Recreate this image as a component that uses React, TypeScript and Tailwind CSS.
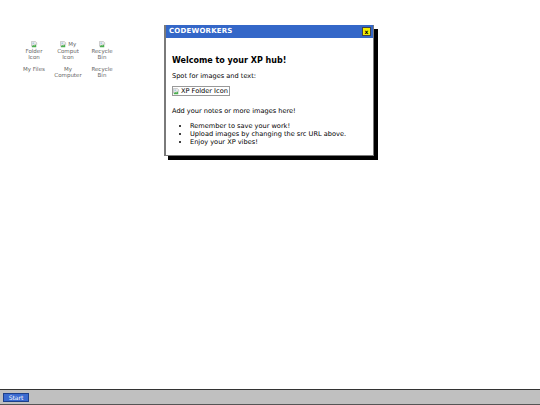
import React from 'react'

const font = { fontFamily: '"DejaVu Sans", Verdana, sans-serif' }

function BrokenImg() {
  return (
    <svg width="7" height="7" viewBox="0 0 16 16" className="inline-block align-top">
      <path d="M1 1h9l3 3v4l-2 2-2-2-3 3-2-2-3 3z" fill="#e8e8e8" stroke="#9a9a9a" strokeWidth="1" />
      <path d="M2 12l3-3 2 2 3-3 2 2v4H2z" fill="#4caf50" />
      <circle cx="5" cy="5" r="1.5" fill="#7fbbe8" />
    </svg>
  )
}

const icons = [
  { alt: 'Folder Icon', label: ['My Files'] },
  { alt: 'My Comput Icon', label: ['My', 'Computer'] },
  { alt: 'Recycle Bin', label: ['Recycle', 'Bin'] },
]

export default function App() {
  return (
    <div className="flex flex-col w-[540px] h-[405px] bg-white overflow-hidden" style={font}>
      {/* Desktop */}
      <div className="relative flex-1">
        <div className="flex gap-[2px] pl-[18px] pt-[41px]">
          {icons.map((ic) => (
            <div key={ic.alt} className="w-[32px] flex flex-col items-center text-[5.5px] leading-[6px] text-[#666]">
              <div className="w-[22px] h-[21px] overflow-hidden text-center">
                <BrokenImg /> {ic.alt}
              </div>
              <div className="mt-[4px] text-center">
                {ic.label.map((l) => (
                  <div key={l}>{l}</div>
                ))}
              </div>
            </div>
          ))}
        </div>

        {/* Window */}
        <div className="absolute left-[164px] top-[25px] w-[210px] h-[131px] bg-white border-l-2 border-[#7a7a7a] border-r border-b shadow-[4px_4px_0_#000] flex flex-col">
          <div className="h-[13px] bg-[#3467c8] flex items-center justify-between pl-[3px] pr-[2px]">
            <span className="text-white font-bold text-[7px] tracking-[0.2px]">CODEWORKERS</span>
            <button className="w-[9px] h-[9px] bg-[#f4f000] border border-[#444] text-[6px] leading-[6px] font-bold text-black flex items-center justify-center">
              x
            </button>
          </div>
          <div className="px-[6px] pt-[18px] text-[6.6px] leading-[8px] text-black">
            <h1 className="font-bold text-[8px] leading-[10px]">Welcome to your XP hub!</h1>
            <p className="mt-[6px]">Spot for images and text:</p>
            <div className="mt-[6px] inline-flex items-center gap-[1px] border border-[#999] pr-[1px] h-[10px]">
              <BrokenImg />
              <span>XP Folder Icon</span>
            </div>
            <p className="mt-[10px]">Add your notes or more images here!</p>
            <ul className="mt-[7px] pl-[18px] list-disc">
              <li>Remember to save your work!</li>
              <li>Upload images by changing the src URL above.</li>
              <li>Enjoy your XP vibes!</li>
            </ul>
          </div>
        </div>
      </div>

      {/* Taskbar */}
      <div className="h-[16px] bg-[#c0c0c0] border-t border-[#333] border-b border-b-[#555] flex items-center pl-[3px]">
        <button className="h-[9px] w-[26px] bg-[#3a6ad0] border border-[#1d3f8a] text-white text-[6px] leading-[7px]">
          Start
        </button>
      </div>
    </div>
  )
}
